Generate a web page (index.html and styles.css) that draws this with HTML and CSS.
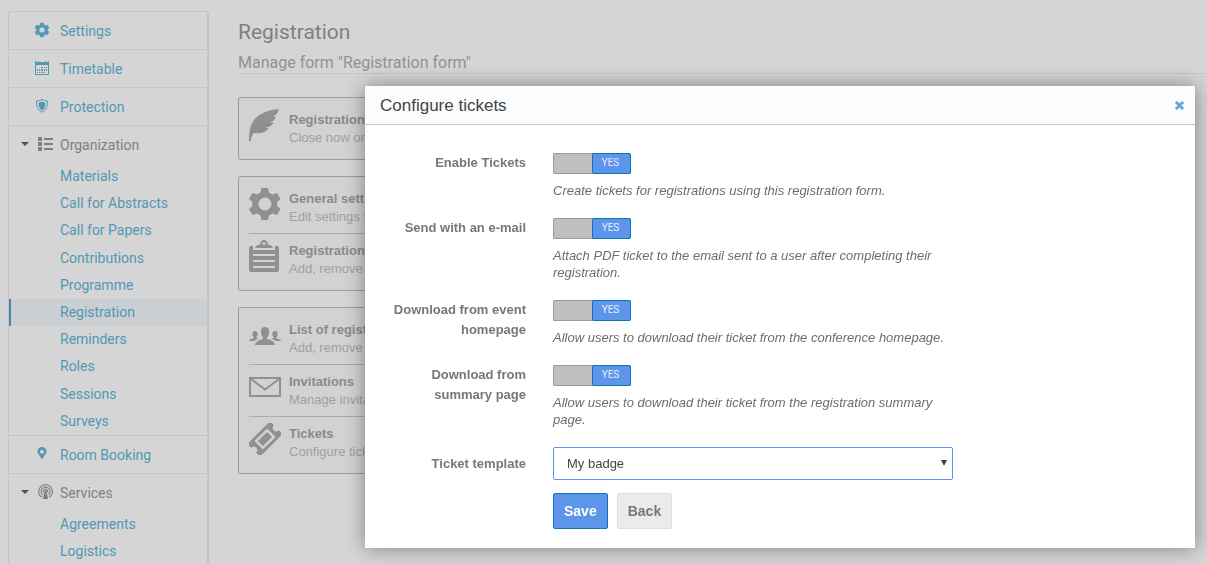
FILE: index.html
```html
<!DOCTYPE html>
<html lang="en">
<head>
<meta charset="utf-8">
<title>Configure tickets</title>
<link rel="stylesheet" href="styles.css">
</head>
<body>
<div class="page">
  <nav class="sidebar" aria-label="Event management">
    <a class="nav-row" href="#"><svg class="nav-icon" viewBox="0 0 16 16"><path fill="currentColor" fill-rule="evenodd" d="M6.300 1h3.400l.5 2.100 1.100.6 2-.7L15 6l-1.500 1.400v1.200L15 10l-1.700 3-2-.7-1.100.6-.5 2.100H6.300l-.5-2.100-1.100-.6-2 .7L1 10l1.500-1.400V7.400L1 6l1.700-3 2 .7 1.100-.6zM8 5.200a2.800 2.800 0 1 0 0 5.600 2.800 2.800 0 0 0 0-5.600z" stroke="currentColor" stroke-width=".4"/></svg>Settings</a>
    <a class="nav-row" href="#"><svg class="nav-icon" viewBox="0 0 16 16"><path fill="currentColor" d="M1 1h1v1h2V1h1v1h6V1h1v1h2V1h1v4H1zM1 5h1v9h12V5h1v10H1z"/><path fill="currentColor" d="M7 7h2v1H7zm3 0h1v1h-1zm2 0h1v1h-1zM3 9h1v2H3zm2 0h1v2H5zm2 0h2v2H7zm3 0h1v2h-1zm2 0h1v2h-1zM3 12h1v1H3zm2 0h1v1H5zm2 0h2v1H7zm3 0h1v1h-1z"/></svg>Timetable</a>
    <a class="nav-row" href="#"><svg class="nav-icon" viewBox="0 0 16 16"><path fill="none" stroke="currentColor" d="M8 1.300C6.500 2.500 4.500 3 2.500 3c0 5 1 8.500 5.500 11.300C12.500 11.500 13.500 8 13.500 3c-2 0-4-.5-5.500-1.700z"/><path fill="currentColor" d="M8 3.500C7 4.200 5.800 4.600 4.600 4.700 4.700 8.500 5.500 10.800 8 12.500c2.500-1.700 3.300-4 3.400-7.800C10.200 4.600 9 4.200 8 3.500z"/></svg>Protection</a>
    <div class="nav-group">
      <div class="nav-head"><span class="caret"></span><svg class="nav-icon" viewBox="0 0 16 16"><path fill="currentColor" d="M0 1h4v4H0zm0 5h4v4H0zm0 5h4v4H0zM6 2h9v2H6zm0 5h9v2H6zm0 5h9v2H6z"/></svg>Organization</div>
      <ul class="nav-list">
        <li><a href="#">Materials</a></li>
        <li><a href="#">Call for Abstracts</a></li>
        <li><a href="#">Call for Papers</a></li>
        <li><a href="#">Contributions</a></li>
        <li><a href="#">Programme</a></li>
        <li><a class="active" href="#">Registration</a></li>
        <li><a href="#">Reminders</a></li>
        <li><a href="#">Roles</a></li>
        <li><a href="#">Sessions</a></li>
        <li><a href="#">Surveys</a></li>
      </ul>
    </div>
    <a class="nav-row" href="#"><svg class="nav-icon" viewBox="0 0 16 16"><path fill="currentColor" fill-rule="evenodd" d="M8 1a4.500 4.500 0 0 0-4.500 4.600C3.500 8 6.500 10 8 14c1.500-4 4.500-6 4.500-8.400A4.500 4.500 0 0 0 8 1zm0 2.700a2 2 0 1 1 0 4 2 2 0 0 1 0-4z"/></svg>Room Booking</a>
    <div class="nav-group">
      <div class="nav-head"><span class="caret"></span><svg class="nav-icon" viewBox="0 0 16 16"><g fill="none" stroke="currentColor" stroke-width="1.200"><path d="M4 13.300a6.800 6.800 0 1 1 7 0"/><path d="M4.600 10.800a4.400 4.400 0 1 1 5.800 0"/><path d="M5.500 8.500a2.200 2.200 0 1 1 4 0"/></g><path fill="currentColor" d="M7.500 6.500a1.200 1.200 0 0 1 1.100 1.700L10.200 15H4.800l1.600-6.800a1.200 1.200 0 0 1 1.100-1.700z"/></svg>Services</div>
      <ul class="nav-list">
        <li><a href="#">Agreements</a></li>
        <li><a href="#">Logistics</a></li>
      </ul>
    </div>
  </nav>

  <main class="content">
    <header class="heading">
      <h1>Registration</h1>
      <h2>Manage form "Registration form"</h2>
    </header>

    <section class="card">
      <div class="entry">
        <svg class="entry-icon" viewBox="0 0 32 32"><path fill="currentColor" d="M30 0C17 1 7 6 3 14 .5 19 0 26 0 32h2c0-4 1-6 3-8 5 1 11 0 15-5-2 0-3 0-4-.5 4 0 7-1.500 9-5-2 0-3 0-4-.5 3-.5 5-2 5.500-5-1 0-2 0-2.500-.3C27.500 6 29 3.500 30 0z"/></svg>
        <div class="entry-text"><h3>Registration</h3><p>Close now or</p></div>
      </div>
    </section>

    <section class="card">
      <div class="entry">
        <svg class="entry-icon" viewBox="0 0 32 32"><path fill="currentColor" fill-rule="evenodd" d="M12.500 0h6.500l1 4.500 3.500 2L28 5l3.500 6-3.300 3v4l3.300 3-3.500 6-4.500-1.500-3.500 2-1 4.500h-6.500l-1-4.500-3.500-2L3.500 27 0 21l3.300-3v-4L0 11l3.500-6L8 6.500l3.500-2zM16 9.500a6.500 6.500 0 1 0 0 13 6.500 6.500 0 0 0 0-13z"/></svg>
        <div class="entry-text"><h3>General settings</h3><p>Edit settings for</p></div>
      </div>
      <div class="entry">
        <svg class="entry-icon" viewBox="0 0 32 32"><path fill="currentColor" fill-rule="evenodd" d="M15 0a3.500 3.500 0 0 0-3.500 4C9 5 7 5.500 6 8h18c-1-2.500-3-3-5.500-4A3.500 3.500 0 0 0 15 0zm0 2a1.500 1.500 0 1 1 0 3 1.500 1.500 0 0 1 0-3zM2 6h2v4h22V6h2q2 0 2 2v22q0 2-2 2H2q-2 0-2-2V8q0-2 2-2zm2 8v2h22v-2zm0 6v2h22v-2zm0 6v2h22v-2z"/></svg>
        <div class="entry-text"><h3>Registration</h3><p>Add, remove</p></div>
      </div>
    </section>

    <section class="card">
      <div class="entry">
        <svg class="entry-icon" viewBox="0 0 32 32"><g fill="currentColor"><path d="M16 8c-3 0-4.500 2.500-4 6 .3 2 1 3.500 2 4.500v1.500c-4 1-7.500 2.500-8 6h20c-.5-3.500-4-5-8-6v-1.500c1-1 1.700-2.500 2-4.500.5-3.500-1-6-4-6z"/><path id="person" d="M6 12c-2 0-3 1.500-2.500 4 .2 1 .6 1.700 1.200 2.200v1C2 19.700.3 20.500 0 22h5.500c1.200-1.200 2.500-2 4.200-2.500-.7-.3-1.500-.4-2.300-.5v-.8c.6-.5 1-1.200 1.200-2.200C9 13.500 8 12 6 12z"/><use href="#person" transform="matrix(-1 0 0 1 32 0)"/></g></svg>
        <div class="entry-text"><h3>List of regist</h3><p>Add, remove</p></div>
      </div>
      <div class="entry">
        <svg class="entry-icon" viewBox="0 0 32 32"><path fill="none" stroke="currentColor" stroke-width="2" d="M1 7h30v18H1zM2 8l14 10.500L30 8"/></svg>
        <div class="entry-text"><h3>Invitations</h3><p>Manage invitations</p></div>
      </div>
      <div class="entry">
        <svg class="entry-icon" viewBox="0 0 32 32"><g transform="rotate(-45 16 16)"><path fill="currentColor" fill-rule="evenodd" d="M0 7h32v5.500a3.500 3.500 0 0 0 0 7V25H0v-5.500a3.500 3.500 0 0 0 0-7zM7 10v12h18V10zm2.500 2.500h13v7h-13z"/></g></svg>
        <div class="entry-text"><h3>Tickets</h3><p>Configure tickets</p></div>
      </div>
    </section>
  </main>
</div>

<div class="overlay">
  <div class="dialog" role="dialog" aria-labelledby="dialog-title">
    <header class="dialog-head">
      <h2 id="dialog-title">Configure tickets</h2>
      <button class="close" type="button" aria-label="Close"><svg viewBox="0 0 10 10"><path stroke="currentColor" stroke-width="3" d="M1 1l8 8M9 1L1 9"/></svg></button>
    </header>
    <form class="form">
      <div class="field">
        <label class="field-label" for="enable">Enable Tickets</label>
        <div class="field-body">
          <label class="switch"><input type="checkbox" id="enable" checked><span class="knob">YES</span></label>
          <p class="hint">Create tickets for registrations using this registration form.</p>
        </div>
      </div>
      <div class="field">
        <label class="field-label" for="email">Send with an e-mail</label>
        <div class="field-body">
          <label class="switch"><input type="checkbox" id="email" checked><span class="knob">YES</span></label>
          <p class="hint">Attach PDF ticket to the email sent to a user after completing their registration.</p>
        </div>
      </div>
      <div class="field">
        <label class="field-label" for="homepage">Download from event homepage</label>
        <div class="field-body">
          <label class="switch"><input type="checkbox" id="homepage" checked><span class="knob">YES</span></label>
          <p class="hint">Allow users to download their ticket from the conference homepage.</p>
        </div>
      </div>
      <div class="field">
        <label class="field-label" for="summary">Download from summary page</label>
        <div class="field-body">
          <label class="switch"><input type="checkbox" id="summary" checked><span class="knob">YES</span></label>
          <p class="hint">Allow users to download their ticket from the registration summary page.</p>
        </div>
      </div>
      <div class="field field-select">
        <label class="field-label" for="template">Ticket template</label>
        <div class="select-wrap">
          <select id="template"><option>My badge</option></select>
          <svg class="arrow" viewBox="0 0 6 6"><path fill="currentColor" d="M0 0h6L3 6z"/></svg>
        </div>
      </div>
      <div class="actions">
        <button class="btn btn-primary" type="submit">Save</button>
        <button class="btn" type="button">Back</button>
      </div>
    </form>
  </div>
</div>
</body>
</html>
```
FILE: styles.css
```css
* { box-sizing: border-box; }
body {
  margin: 0;
  background: #d5d5d5;
  font-family: "Liberation Sans", Arial, sans-serif;
  font-size: 13px;
  overflow: hidden;
}
h1, h2, h3, p, ul { margin: 0; padding: 0; }
a { color: #5298b4; text-decoration: none; }

.page { display: flex; align-items: flex-start; gap: 29px; padding: 11px 0 0 8px; height: 100vh; }

/* Sidebar */
.sidebar {
  flex: none;
  width: 201px;
  border: 1px solid #c5c5c5;
  border-right-width: 2px;
  border-radius: 2px;
  font-family: Roboto, sans-serif;
  font-size: 14px;
  line-height: 1.3;
}
.nav-row, .nav-head { display: flex; align-items: center; height: 37px; padding-top: 2px; }
.nav-row { gap: 10px; padding-left: 25px; }
.nav-head { gap: 6px; padding-left: 12px; color: #808080; }
.sidebar > * + * { border-top: 1px solid #c5c5c5; }
.sidebar > .nav-row + .nav-row, .sidebar > .nav-group + .nav-row { height: 38px; }
.nav-icon { width: 16px; height: 16px; margin-bottom: 3px; }
.caret {
  width: 8px;
  margin: 0 3px 3px 0;
  border: 4px solid transparent;
  border-top-color: #505050;
  border-bottom: 0;
}
.nav-list { list-style: none; }
.nav-list a { display: block; padding: 4px 0 5px 51px; }
.nav-list .active { background: #cbcfd4; border-left: 2px solid #5284a8; padding-left: 49px; }

/* Page content */
.content { flex: 1; display: flex; flex-direction: column; gap: 16px; }
.heading {
  font-family: Roboto, sans-serif;
  border-bottom: 1px solid #c8c8c8;
  margin-bottom: 7px;
}
.heading h1 { font-size: 21px; line-height: 42px; font-weight: 400; color: #808080; }
.heading h2 { font-size: 16px; line-height: 20px; font-weight: 400; color: #929292; }
.card {
  margin-right: 30px;
  padding: 11px 10px 12px;
  border: 1px solid #9c9c9c;
  border-radius: 2px;
  background: #d2d2d2;
}
.entry { display: flex; gap: 8px; color: #909090; }
.entry + .entry { border-top: 1px solid #ababab; margin-top: 7px; padding-top: 6px; }
.entry-icon { flex: none; width: 32px; height: 32px; }
.entry-text { padding-top: 2px; line-height: 18px; }
.entry h3 { font-size: 13px; color: #8a8a8a; }
.entry p { color: #a0a0a0; }

/* Dialog */
.overlay { position: fixed; inset: 0; display: flex; justify-content: flex-end; align-items: flex-start; padding: 86px 12px 0; }
.dialog {
  width: 100%;
  max-width: 830px;
  background: #fff;
  border-radius: 1px;
  box-shadow: 0 0 20px rgba(0, 0, 0, .4);
}
.dialog-head {
  display: flex;
  align-items: center;
  justify-content: space-between;
  height: 39px;
  padding: 0 11px 0 15px;
  background: #fcfcfc;
  border-bottom: 1px solid #c8c8c8;
}
.dialog-head h2 { padding-top: 2px; font-size: 17px; line-height: 20px; font-weight: 400; color: #444; }
.close { display: flex; padding: 0; border: 0; background: none; color: #5fa5d5; }
.close svg { width: 9px; height: 9px; }
.form { display: flex; flex-direction: column; gap: 19px; padding: 28px 20px 19px; }
.field { display: grid; grid-template-columns: 141px minmax(0, 400px); column-gap: 27px; }
.field-label { font-weight: 700; line-height: 20px; text-align: right; color: #777; }
.field-body { display: flex; flex-direction: column; align-items: flex-start; gap: 8px; }
.switch {
  position: relative;
  display: flex;
  justify-content: flex-end;
  width: 78px;
  height: 21px;
  background: #bfbfbf;
  border-radius: 2px;
  box-shadow: inset 0 0 0 1px #999;
}
.switch input { position: absolute; inset: 0; margin: 0; opacity: 0; }
.knob {
  width: 39px;
  padding-right: 2px;
  border: 1px solid #0b76b3;
  border-radius: 2px;
  background: #5c95ea;
  color: #e8f0fc;
  font-family: Roboto, sans-serif;
  font-size: 10px;
  line-height: 18px;
  text-align: center;
}
.hint { font-style: italic; line-height: 17px; color: #6c6c6c; }
.field-select { align-items: center; }
.select-wrap { position: relative; }
select {
  appearance: none;
  display: block;
  width: 100%;
  height: 33px;
  padding: 0 13px;
  border: 1px solid #5c95ea;
  border-radius: 2px;
  background: #fff;
  color: #444;
  font: inherit;
}
.arrow { position: absolute; right: 6px; top: 13px; width: 6px; height: 6px; color: #444; pointer-events: none; }
.actions { display: flex; gap: 9px; margin: -6px 0 0 168px; }
.btn {
  height: 36px;
  padding: 0 10px;
  border: 1px solid #ddd;
  border-radius: 2px;
  background: #ebebeb;
  color: #777;
  font: 700 14px "Liberation Sans", Arial, sans-serif;
}
.btn-primary { border-color: #0b76b3; background: #5c95ea; color: #fff; }
```
